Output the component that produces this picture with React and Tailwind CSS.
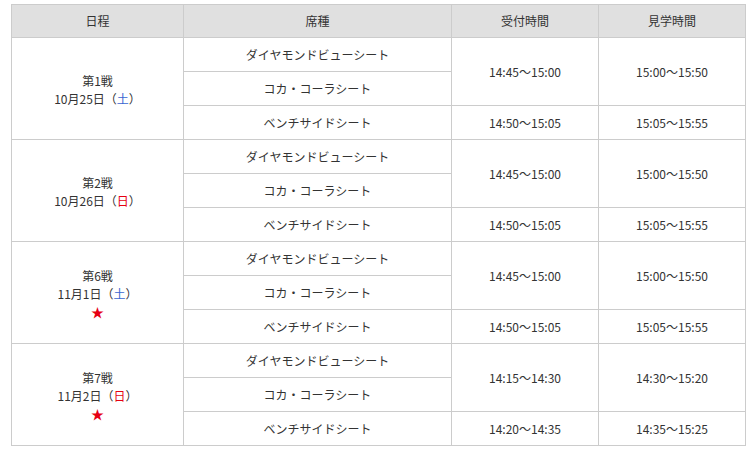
import React from "react";

const games = [
  { name: "第1戦", date: "10月25日", day: "土", star: false, t: ["14:45〜15:00", "15:00〜15:50", "14:50〜15:05", "15:05〜15:55"] },
  { name: "第2戦", date: "10月26日", day: "日", star: false, t: ["14:45〜15:00", "15:00〜15:50", "14:50〜15:05", "15:05〜15:55"] },
  { name: "第6戦", date: "11月1日", day: "土", star: true, t: ["14:45〜15:00", "15:00〜15:50", "14:50〜15:05", "15:05〜15:55"] },
  { name: "第7戦", date: "11月2日", day: "日", star: true, t: ["14:15〜14:30", "14:30〜15:20", "14:20〜14:35", "14:35〜15:25"] },
];

const td = "border border-[#cccccc] text-center align-middle p-0";

export default function App() {
  return (
    <div
      className="bg-white w-[749px] h-[451px] pl-[11px] pt-[4px] text-[12px] text-[#333333]"
      style={{ fontFamily: '"Noto Sans CJK JP", "Noto Sans", sans-serif' }}
    >
      <table className="table-fixed border-collapse w-[734px]">
        <colgroup>
          <col className="w-[172px]" />
          <col className="w-[268px]" />
          <col className="w-[147px]" />
          <col className="w-[147px]" />
        </colgroup>
        <thead>
          <tr className="h-[33px] bg-[#e0e0e0]">
            <th className={td + " font-normal"}>日程</th>
            <th className={td + " font-normal"}>席種</th>
            <th className={td + " font-normal"}>受付時間</th>
            <th className={td + " font-normal"}>見学時間</th>
          </tr>
        </thead>
        <tbody>
          {games.map((g) => (
            <React.Fragment key={g.name}>
              <tr className="h-[34px]">
                <td rowSpan={3} className={td + " leading-[18px]"}>
                  <div className="pt-[2px]">{g.name}</div>
                  <div>
                    {g.date}（
                    <span className={g.day === "土" ? "text-[#3a66d1]" : "text-[#e60012]"}>{g.day}</span>
                    ）
                  </div>
                  {g.star && <div className="text-[#e60012] text-[13px]">★</div>}
                </td>
                <td className={td}>ダイヤモンドビューシート</td>
                <td rowSpan={2} className={td}>{g.t[0]}</td>
                <td rowSpan={2} className={td}>{g.t[1]}</td>
              </tr>
              <tr className="h-[34px]">
                <td className={td}>コカ・コーラシート</td>
              </tr>
              <tr className="h-[34px]">
                <td className={td}>ベンチサイドシート</td>
                <td className={td}>{g.t[2]}</td>
                <td className={td}>{g.t[3]}</td>
              </tr>
            </React.Fragment>
          ))}
        </tbody>
      </table>
    </div>
  );
}
